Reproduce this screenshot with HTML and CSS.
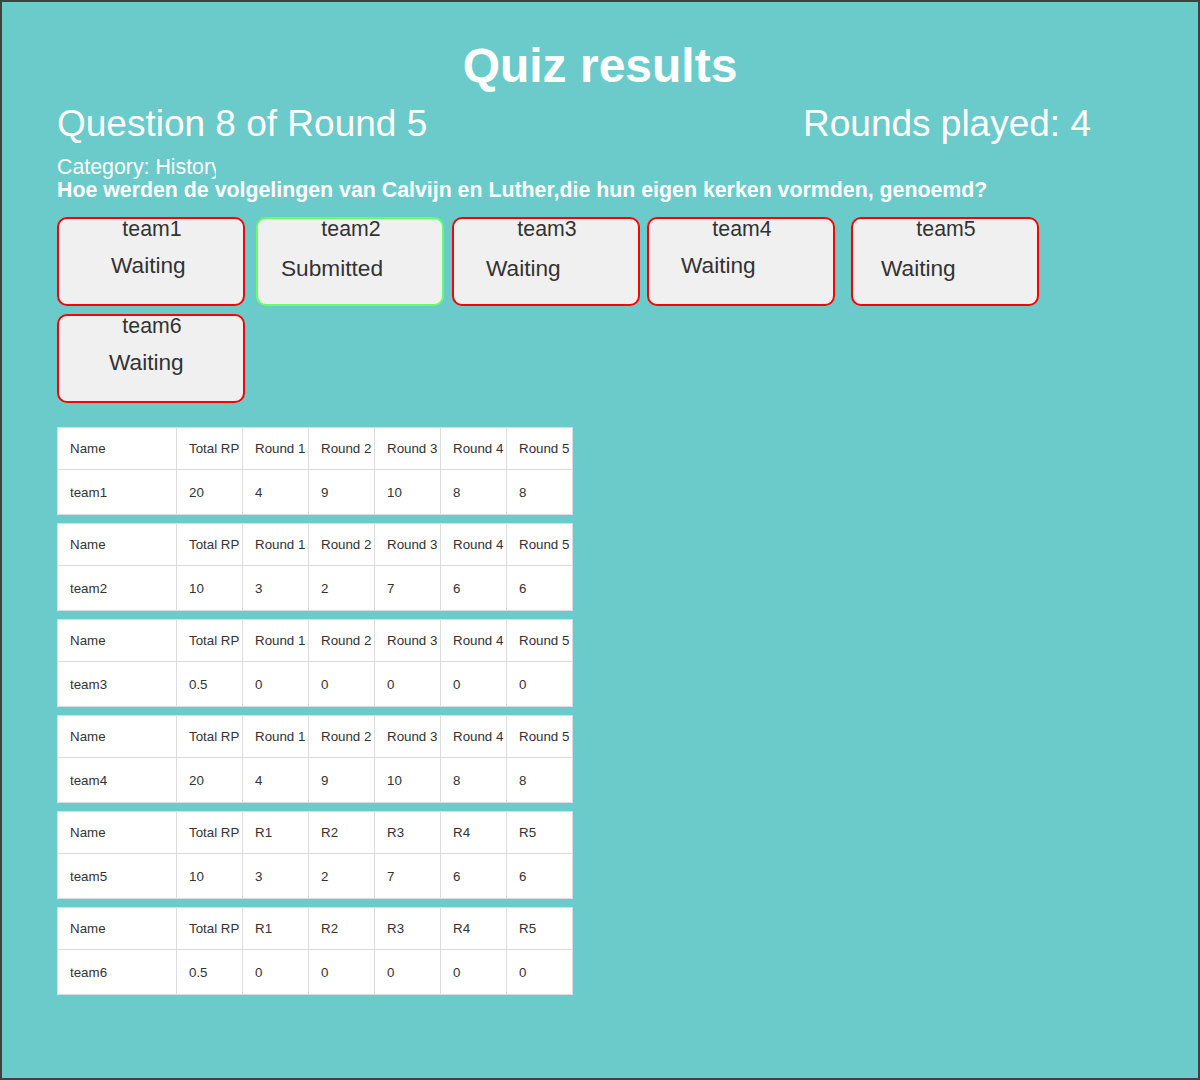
FILE: index.html
```html
<!DOCTYPE html>
<html lang="nl">
<head>
<meta charset="utf-8">
<title>Quiz results</title>
<link rel="stylesheet" href="styles.css">
</head>
<body>
<div class="frame">
  <div class="page">
    <h1 class="title">Quiz results</h1>
    <div class="stats-row">
      <h2 class="stat">Question 8 of Round 5</h2>
      <h2 class="stat">Rounds played: 4</h2>
    </div>
    <div class="category">Category: History</div>
    <div class="question">Hoe werden de volgelingen van Calvijn en Luther,die hun eigen kerken vormden, genoemd?</div>

    <div class="teams">
      <div class="card waiting c1"><div class="name">team1</div><div class="status">Waiting</div></div>
      <div class="card submitted c2"><div class="name">team2</div><div class="status">Submitted</div></div>
      <div class="card waiting c3"><div class="name">team3</div><div class="status">Waiting</div></div>
      <div class="card waiting c4"><div class="name">team4</div><div class="status">Waiting</div></div>
      <div class="card waiting c5"><div class="name">team5</div><div class="status">Waiting</div></div>
      <div class="card waiting c6"><div class="name">team6</div><div class="status">Waiting</div></div>
    </div>

    <div class="tables">
      <table class="score">
        <tr><th>Name</th><th>Total RP</th><th>Round 1</th><th>Round 2</th><th>Round 3</th><th>Round 4</th><th>Round 5</th></tr>
        <tr><td>team1</td><td>20</td><td>4</td><td>9</td><td>10</td><td>8</td><td>8</td></tr>
      </table>
      <table class="score">
        <tr><th>Name</th><th>Total RP</th><th>Round 1</th><th>Round 2</th><th>Round 3</th><th>Round 4</th><th>Round 5</th></tr>
        <tr><td>team2</td><td>10</td><td>3</td><td>2</td><td>7</td><td>6</td><td>6</td></tr>
      </table>
      <table class="score">
        <tr><th>Name</th><th>Total RP</th><th>Round 1</th><th>Round 2</th><th>Round 3</th><th>Round 4</th><th>Round 5</th></tr>
        <tr><td>team3</td><td>0.5</td><td>0</td><td>0</td><td>0</td><td>0</td><td>0</td></tr>
      </table>
      <table class="score">
        <tr><th>Name</th><th>Total RP</th><th>Round 1</th><th>Round 2</th><th>Round 3</th><th>Round 4</th><th>Round 5</th></tr>
        <tr><td>team4</td><td>20</td><td>4</td><td>9</td><td>10</td><td>8</td><td>8</td></tr>
      </table>
      <table class="score">
        <tr><th>Name</th><th>Total RP</th><th>R1</th><th>R2</th><th>R3</th><th>R4</th><th>R5</th></tr>
        <tr><td>team5</td><td>10</td><td>3</td><td>2</td><td>7</td><td>6</td><td>6</td></tr>
      </table>
      <table class="score">
        <tr><th>Name</th><th>Total RP</th><th>R1</th><th>R2</th><th>R3</th><th>R4</th><th>R5</th></tr>
        <tr><td>team6</td><td>0.5</td><td>0</td><td>0</td><td>0</td><td>0</td><td>0</td></tr>
      </table>
    </div>
  </div>
</div>
</body>
</html>
```

FILE: styles.css
```css
* { box-sizing: border-box; }

html, body {
  margin: 0;
  padding: 0;
}

body {
  font-family: "Liberation Sans", Arial, sans-serif;
  color: #333;
}

.frame {
  width: 1200px;
  height: 1080px;
  border: 2px solid #404040;
  background: #6bcbca;
  overflow: hidden;
}

.page {
  padding: 36px 55px 0 55px;
}

.title {
  margin: 0;
  font-size: 48px;
  line-height: 56px;
  font-weight: bold;
  color: #fff;
  text-align: center;
}

.stats-row {
  display: flex;
  justify-content: space-between;
  margin: 9px 52px 0 0;
}

.stat {
  margin: 0;
  font-size: 37px;
  line-height: 42px;
  font-weight: normal;
  color: #fff;
}

.category {
  margin-top: 11px;
  width: 159px;
  overflow: hidden;
  white-space: nowrap;
  font-size: 21.33px;
  line-height: 23px;
  color: #fff;
}

.question {
  font-size: 21.33px;
  line-height: 23px;
  font-weight: bold;
  color: #fff;
  white-space: nowrap;
}

/* team status cards */
.teams {
  display: flex;
  flex-wrap: wrap;
  row-gap: 8px;
  margin-top: 15px;
}

.card {
  width: 188px;
  height: 89px;
  background: #f0f0f0;
  border: 2px solid #ff0000;
  border-radius: 10px;
}

.card.submitted { border-color: #66ff66; }

.name {
  text-align: center;
  font-size: 21.33px;
  line-height: 20px;
  color: #333;
  padding-left: 2px;
}

.status {
  font-size: 22.67px;
  line-height: 26px;
  color: #333;
  white-space: nowrap;
}

.c1 { margin-right: 11px; }
.c2 { margin-right: 8px; }
.c3 { margin-right: 7px; }
.c4 { margin-right: 16px; }

.c1 .status { margin-top: 13px; padding-left: 52px; }
.c2 .status { margin-top: 16px; padding-left: 23px; }
.c3 .status { margin-top: 16px; padding-left: 32px; }
.c4 .status { margin-top: 13px; padding-left: 32px; }
.c5 .status { margin-top: 16px; padding-left: 28px; }
.c6 .status { margin-top: 13px; padding-left: 50px; }

/* score tables */
.tables {
  display: flex;
  flex-direction: column;
  gap: 8px;
  margin-top: 24px;
}

.score {
  width: 515px;
  table-layout: fixed;
  border-collapse: collapse;
  background: #fff;
  font-size: 13.33px;
  color: #333;
}

.score th,
.score td {
  border: 1px solid #dddddd;
  padding: 0 0 0 12px;
  text-align: left;
  font-weight: normal;
  white-space: nowrap;
  overflow: hidden;
  line-height: 15px;
  width: 66px;
}

.score th:first-child,
.score td:first-child {
  width: 119px;
}

.score th { height: 42px; }
.score td { height: 45px; }
```
